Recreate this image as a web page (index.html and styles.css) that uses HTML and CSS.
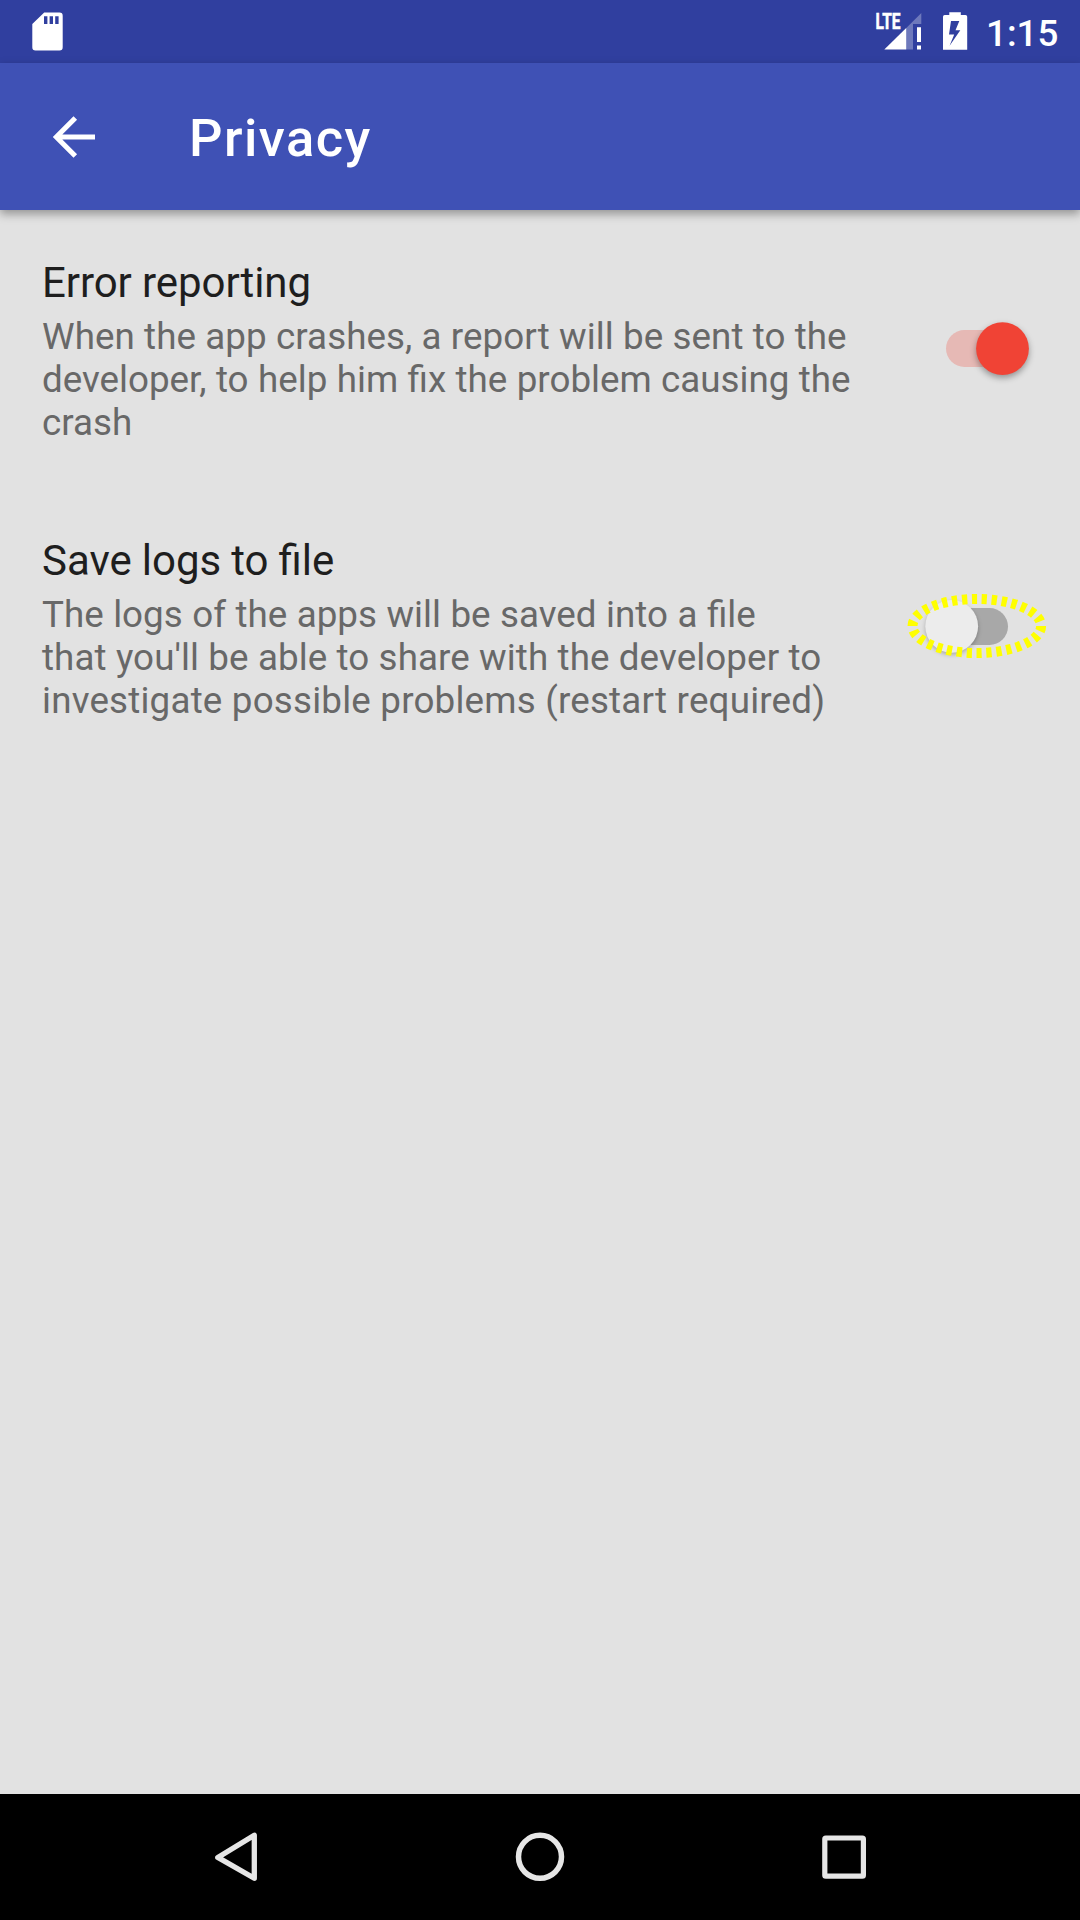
FILE: index.html
```
<!DOCTYPE html>
<html lang="en">
<head>
<meta charset="utf-8">
<title>Privacy</title>
<link rel="stylesheet" href="styles.css">
</head>
<body>
<div class="screen">
  <div class="status-bar">
    <svg class="sd-icon" viewBox="0 0 40 48" aria-hidden="true">
      <path fill="#fff" fill-rule="evenodd" d="M12.2 4.5H27.5a3.2 3.2 0 0 1 3.2 3.2V39.300a3.200 3.200 0 0 1-3.200 3.200H3.500a3.200 3.200 0 0 1-3.200-3.200V16ZM12 8.300V16h3.400V8.300ZM17.600 8.300V16h3.400V8.300ZM23.200 8.300V16h3.400V8.300Z"/>
    </svg>
    <div class="status-right">
      <svg class="signal-icon" viewBox="876 0 46 63">
        <path fill="#fff" fill-opacity=".3" d="M921.3 13V24H913V49.600H906V28.300Z"/>
        <path fill="#fff" d="M884.300 49.600 906.200 28V49.600Z"/>
        <path fill="#fff" d="M917 27.300h4V42h-4ZM917 45.500h4v4h-4Z"/>
        <text class="lte" x="875.500" y="29" textLength="25" lengthAdjust="spacingAndGlyphs">LTE</text>
      </svg>
      <svg class="battery-icon" viewBox="943 0 25 63" aria-hidden="true">
        <path fill="#fff" fill-rule="evenodd" d="M949.300 12.300h11.500V15h4.700q1.700 0 1.700 1.700V49.700H943V16.700q0-1.700 1.700-1.700h4.600ZM951 21l-2 13.500h5.200L949.600 45.700 960.300 30.300H955.500L959.300 21Z"/>
      </svg>
      <span class="clock">1:15</span>
    </div>
  </div>
  <header class="app-bar">
    <svg class="back-icon" viewBox="0 0 44 44" aria-hidden="true">
      <path d="M43 22H5M23.300 3 4.300 22 23.300 41" fill="none" stroke="#fff" stroke-width="5"/>
    </svg>
    <h1 class="title">Privacy</h1>
  </header>
  <main class="settings">
    <section class="setting">
      <div class="copy">
        <h2 class="name name-tight">Error reporting</h2>
        <p class="summary"><span class="line loose-1">When the app crashes, a report will be sent to the</span> <span class="line words-1">developer, to help him fix the problem causing the</span> <span class="line">crash</span></p>
      </div>
      <svg class="switch" viewBox="906 309 144 80" role="img" aria-label="On">
        <rect x="946" y="330" width="62" height="37" rx="18.500" fill="#e6b9b5"/>
        <circle class="thumb" cx="1002.500" cy="348.600" r="26.400" fill="#f04335"/>
      </svg>
    </section>
    <section class="setting">
      <div class="copy">
        <h2 class="name name-words">Save logs to file</h2>
        <p class="summary"><span class="line words-2">The logs of the apps will be saved into a file</span> <span class="line loose-2">that you'll be able to share with the developer to</span> <span class="line loose-3">investigate possible problems (restart required)</span></p>
      </div>
      <svg class="switch" viewBox="906 587 144 80" role="img" aria-label="Off">
        <rect x="946" y="608" width="62" height="37" rx="18.500" fill="#a8a8a8"/>
        <circle class="thumb thumb-off" cx="951.700" cy="626.300" r="26.400" fill="#ececec"/>
        <ellipse cx="976.800" cy="626" rx="64.300" ry="27" pathLength="300" fill="none" stroke="#ff0" stroke-width="10" stroke-dasharray="5.300 4.700"/>
      </svg>
    </section>
  </main>
  <nav class="nav-bar">
    <svg class="nav-icon" viewBox="206 1827 60 60" aria-hidden="true">
      <path d="M254.300 1835.200V1878.300L217.800 1857.400Z" fill="none" stroke="#e6e6e6" stroke-width="5.300" stroke-linejoin="round"/>
    </svg>
    <svg class="nav-icon" viewBox="510 1827 60 60" aria-hidden="true">
      <circle cx="540" cy="1856.800" r="21.500" fill="none" stroke="#e6e6e6" stroke-width="5.500"/>
    </svg>
    <svg class="nav-icon" viewBox="814 1827 60 60" aria-hidden="true">
      <rect x="824.800" y="1838" width="38.600" height="38.200" rx="1" fill="none" stroke="#e6e6e6" stroke-width="5.200" stroke-linejoin="round"/>
    </svg>
  </nav>
</div>
</body>
</html>
```
FILE: styles.css
```
* { box-sizing: border-box; margin: 0; padding: 0; }
body { font-family: Roboto, sans-serif; background: #e2e2e2; }
svg { display: block; flex: none; overflow: visible; }
.screen { width: 1080px; height: 1920px; display: flex; flex-direction: column; background: #e2e2e2; overflow: hidden; }
.status-bar { height: 63px; flex: none; background: #303f9f; display: flex; justify-content: space-between; padding: 0 21px 0 32px; }
.sd-icon { width: 40px; height: 48px; margin-top: 8px; }
.status-right { display: flex; }
.signal-icon { width: 46px; height: 63px; margin-right: 21px; }
.battery-icon { width: 25px; height: 63px; margin-right: 18px; }
.lte { font-size: 22.500px; font-weight: 700; fill: #fff; stroke: #fff; stroke-width: .6px; }
.clock { width: 73px; font-size: 36.750px; font-weight: 500; line-height: 68px; color: #fff; white-space: nowrap; }
.app-bar { height: 147px; flex: none; background: #3f51b5; display: flex; align-items: center; padding-left: 52px; box-shadow: 0 4px 9px rgba(0, 0, 0, .35); }
.back-icon { width: 44px; height: 44px; }
.title { margin-left: 93px; padding-top: 2px; font-size: 52.500px; line-height: 62px; font-weight: 500; letter-spacing: 1.450px; color: #fff; }
.settings { flex: 1; padding: 33px 30px 0 42px; }
.setting { height: 278px; display: flex; justify-content: space-between; }
.copy { padding-top: 15px; }
.name { font-size: 42px; line-height: 49px; font-weight: 400; color: #1e1e1e; }
.name-tight { letter-spacing: -.08px; }
.name-words { word-spacing: -.4px; }
.summary { margin-top: 8px; font-size: 36.750px; line-height: 43px; color: #686868; white-space: nowrap; }
.line { display: block; }
.loose-1 { letter-spacing: .075px; }
.loose-2 { letter-spacing: .1px; }
.loose-3 { letter-spacing: .2px; }
.words-1 { word-spacing: .3px; }
.words-2 { word-spacing: .4px; }
.switch { width: 144px; height: 80px; margin-top: 66px; }
.thumb { filter: drop-shadow(0 3px 3px rgba(0, 0, 0, .35)); }
.thumb-off { filter: drop-shadow(0 2px 2px rgba(0, 0, 0, .25)); }
.nav-bar { height: 126px; flex: none; background: #000; display: flex; align-items: center; justify-content: center; gap: 244px; }
.nav-icon { width: 60px; height: 60px; }
```
